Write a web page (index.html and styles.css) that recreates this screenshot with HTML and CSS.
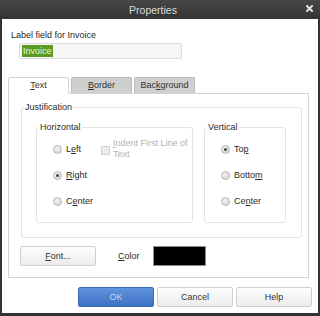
FILE: index.html
```html
<!DOCTYPE html>
<html lang="en">
<head>
    <meta charset="UTF-8">
    <title>Properties</title>
    <link rel="stylesheet" href="styles.css">
</head>
<body>
    <div class="window">
        <div class="titlebar">
            <div class="title">Properties</div>
            <div class="close">
                <svg width="7" height="7" viewBox="0 0 7 7"><path d="M1 1L6 6M6 1L1 6" stroke="#e0e0e0" stroke-width="2" stroke-linecap="square"/></svg>
            </div>
        </div>
        <div class="frame">
            <div class="field-label">Label field for Invoice</div>
            <div class="text-input"><span class="selected">Invoice</span></div>

            <div class="tabs">
                <div class="tab active"><u>T</u>ext</div>
                <div class="tab"><u>B</u>order</div>
                <div class="tab">Bac<u>k</u>ground</div>
            </div>
            <div class="panel">
                <div class="group justification">
                    <span class="group-title">Justification</span>
                    <div class="group horizontal">
                        <span class="group-title">Horizontal</span>
                        <div class="options">
                            <div class="option"><span class="radio"></span>L<u>e</u>ft</div>
                            <div class="option"><span class="radio checked"></span><u>R</u>ight</div>
                            <div class="option"><span class="radio"></span>C<u>e</u>nter</div>
                        </div>
                        <div class="indent">
                            <span class="checkbox"></span>
                            <span><u>I</u>ndent First Line of<br>Text</span>
                        </div>
                    </div>
                    <div class="group vertical">
                        <span class="group-title">Vertical</span>
                        <div class="options">
                            <div class="option"><span class="radio checked"></span>To<u>p</u></div>
                            <div class="option"><span class="radio"></span>Botto<u>m</u></div>
                            <div class="option"><span class="radio"></span>Ce<u>n</u>ter</div>
                        </div>
                    </div>
                </div>
                <div class="font-row">
                    <button class="btn font-btn"><u>F</u>ont...</button>
                    <span class="color-label"><u>C</u>olor</span>
                    <span class="swatch"></span>
                </div>
            </div>

            <div class="actions">
                <button class="btn primary">OK</button>
                <button class="btn">Cancel</button>
                <button class="btn">Help</button>
            </div>
        </div>
    </div>
</body>
</html>
```

FILE: styles.css
```css
body {
    margin: 0;
    font-family: "Liberation Sans", Arial, sans-serif;
    font-size: 9px;
    color: #2a2a2a;
    background: #fff;
}
.window {
    width: 320px;
    height: 316px;
    display: flex;
    flex-direction: column;
}
.titlebar {
    height: 19px;
    display: flex;
    align-items: center;
    background: linear-gradient(#474747, #333);
    color: #dcdcdc;
}
.title {
    flex: 1;
    text-align: center;
    font-size: 10.5px;
}
.close {
    width: 14px;
    display: flex;
    align-items: center;
    height: 19px;
    padding-bottom: 3px;
    box-sizing: border-box;
}
.frame {
    flex: 1;
    border: 2px solid #333;
    border-top: none;
    border-bottom-width: 3px;
    background: #fff;
}
.field-label {
    margin: 11px 0 0 9px;
    line-height: 11px;
}
.text-input {
    margin: 2px 0 0 17px;
    width: 163px;
    height: 16px;
    box-sizing: border-box;
    border: 1px solid #dcdcdc;
    border-radius: 2px;
    background: #f6f6f6;
    display: flex;
    align-items: center;
    padding-left: 2px;
}
.selected {
    background: #5a9c22;
    color: #eaf6d8;
    line-height: 12px;
    padding: 0 1px;
}
.tabs {
    margin: 18px 0 0 6px;
    display: flex;
    align-items: flex-start;
    gap: 2px;
}
.tab {
    width: 61px;
    height: 16px;
    box-sizing: border-box;
    border: 1px solid #bdbdbd;
    border-bottom: none;
    border-radius: 2px 2px 0 0;
    background: #cfcfcf;
    text-align: center;
    line-height: 15px;
    color: #333;
}
.tab.active {
    height: 17px;
    margin-bottom: -1px;
    background: #fff;
    border-color: #d4d4d4;
    position: relative;
    z-index: 1;
}
.panel {
    margin-left: 6px;
    width: 301px;
    height: 185px;
    box-sizing: border-box;
    border: 1px solid #d4d4d4;
    padding: 13px 6px 0 12px;
}
.group {
    position: relative;
    box-sizing: border-box;
    border: 1px solid #e2e2e2;
    border-radius: 3px;
}
.group-title {
    position: absolute;
    top: -6px;
    left: 2px;
    padding: 0 1px;
    line-height: 11px;
    background: #fff;
}
.justification {
    width: 281px;
    height: 131px;
    padding: 19px 0 0 14px;
    display: flex;
    gap: 11px;
}
.horizontal {
    width: 157px;
    height: 96px;
    padding: 8px 0 0 16px;
    display: flex;
}
.vertical {
    width: 82px;
    height: 96px;
    padding: 8px 0 0 16px;
}
.options {
    width: 48px;
}
.option {
    height: 26px;
    display: flex;
    align-items: center;
}
.radio {
    width: 9px;
    height: 9px;
    box-sizing: border-box;
    border: 1px solid #b4b4b4;
    border-radius: 50%;
    background: radial-gradient(circle at 40% 35%, #f2f2f2, #d2d2d2);
    margin-right: 4px;
    display: flex;
    align-items: center;
    justify-content: center;
}
.radio.checked::after {
    content: "";
    width: 3px;
    height: 3px;
    border-radius: 50%;
    background: #444;
}
.indent {
    height: 26px;
    display: flex;
    align-items: center;
    line-height: 11px;
    color: #b3b3b3;
}
.checkbox {
    width: 9px;
    height: 9px;
    box-sizing: border-box;
    border: 1px solid #d0d0d0;
    background: #ececec;
    border-radius: 1px;
    margin-right: 3px;
    margin-top: 2px;
}
.font-row {
    margin-top: 8px;
    display: flex;
    align-items: center;
}
.btn {
    width: 76px;
    height: 20px;
    box-sizing: border-box;
    border: 1px solid #cfcfcf;
    border-radius: 2px;
    background: linear-gradient(#fdfdfd, #ececec);
    font-family: inherit;
    font-size: 9px;
    color: #333;
    padding: 0;
}
.font-btn {
    margin-left: -1px;
}
.color-label {
    margin-left: 22px;
}
.swatch {
    margin-left: 13px;
    width: 53px;
    height: 20px;
    box-sizing: border-box;
    background: #000;
    border: 1px solid #8a8a8a;
}
.actions {
    margin-top: 9px;
    display: flex;
    justify-content: flex-end;
    gap: 3px;
    padding-right: 6px;
}
.btn.primary {
    background: linear-gradient(#5f93de, #3e72c4);
    border-color: #3a68b4;
    color: #cbd9f1;
}
```
